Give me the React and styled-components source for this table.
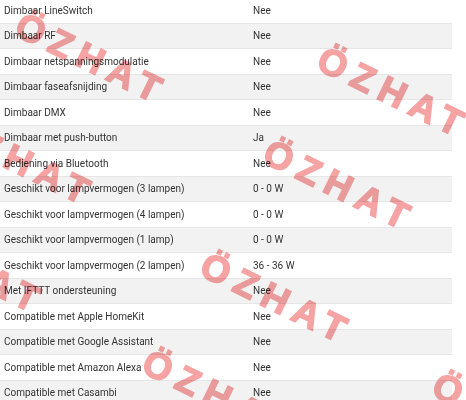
import React from "react";
import styled, { createGlobalStyle } from "styled-components";

const GlobalStyle = createGlobalStyle`
  html, body {
    margin: 0;
    padding: 0;
    background: #ffffff;
    overflow: hidden;
  }
`;

const specs = [
  ["Dimbaar LineSwitch", "Nee"],
  ["Dimbaar RF", "Nee"],
  ["Dimbaar netspanningsmodulatie", "Nee"],
  ["Dimbaar faseafsnijding", "Nee"],
  ["Dimbaar DMX", "Nee"],
  ["Dimbaar met push-button", "Ja"],
  ["Bediening via Bluetooth", "Nee"],
  ["Geschikt voor lampvermogen (3 lampen)", "0 - 0 W"],
  ["Geschikt voor lampvermogen (4 lampen)", "0 - 0 W"],
  ["Geschikt voor lampvermogen (1 lamp)", "0 - 0 W"],
  ["Geschikt voor lampvermogen (2 lampen)", "36 - 36 W"],
  ["Met IFTTT ondersteuning", "Nee"],
  ["Compatible met Apple HomeKit", "Nee"],
  ["Compatible met Google Assistant", "Nee"],
  ["Compatible met Amazon Alexa", "Nee"],
  ["Compatible met Casambi", "Nee"],
];

// watermark centres, measured from the shop page
const marks = [
  [125, -42],
  [92, 59],
  [394, 93],
  [20, 161],
  [340, 186],
  [-30, 269],
  [277, 299],
  [219, 396],
  [509, 419],
];

const Page = styled.div`
  position: relative;
  width: 466px;
  height: 400px;
  overflow: hidden;
  font-family: Roboto, "Liberation Sans", sans-serif;
`;

const Table = styled.div`
  width: 452px;
  margin-top: -2.5px;
`;

const Row = styled.div`
  display: grid;
  grid-template-columns: 249px 1fr;
  align-items: center;
  box-sizing: border-box;
  height: 25.53px;
  padding: 0 4px;
  background: ${({ $shaded }) => ($shaded ? "#f2f2f2" : "#ffffff")};
  border-top: 1px solid ${({ $shaded }) => ($shaded ? "#e6e6e6" : "transparent")};
  border-bottom: 1px solid ${({ $shaded }) => ($shaded ? "#e6e6e6" : "transparent")};
  font-size: 10px;
  color: #333333;
`;

const Cell = styled.span`
  white-space: nowrap;
`;

const Overlay = styled.div`
  position: absolute;
  inset: 0;
  pointer-events: none;
`;

const Mark = styled.span`
  position: absolute;
  transform: translate(-50%, -50%) rotate(26deg);
  font-family: "Liberation Sans", Arial, sans-serif;
  font-weight: 700;
  font-size: 37px;
  letter-spacing: 8px;
  line-height: 1;
  color: #f6a3a3;
  -webkit-text-stroke: 1.6px #f6a3a3;
  mix-blend-mode: multiply;
  white-space: nowrap;
`;

export default function App() {
  return (
    <Page>
      <GlobalStyle />
      <Table>
        {specs.map(([label, value], i) => (
          <Row key={label} $shaded={i % 2 === 1}>
            <Cell>{label}</Cell>
            <Cell>{value}</Cell>
          </Row>
        ))}
      </Table>
      <Overlay>
        {marks.map(([x, y], i) => (
          <Mark key={i} style={{ left: x, top: y }}>
            ÖZHAT
          </Mark>
        ))}
      </Overlay>
    </Page>
  );
}
